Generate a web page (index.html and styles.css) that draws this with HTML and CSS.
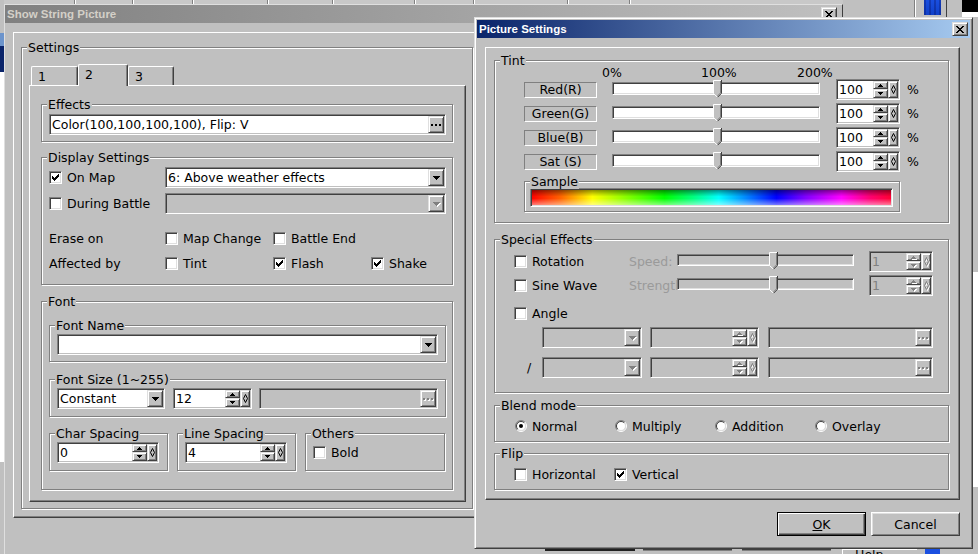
FILE: index.html
```html
<!DOCTYPE html>
<html lang="en">
<head>
<meta charset="utf-8">
<title>Picture Settings</title>
<link rel="stylesheet" href="styles.css">
</head>
<body>
<div class="desktop">
  <div class="bg-top"><span></span><span></span><span></span><span></span><span></span><span></span><span></span><span></span><span></span><span></span></div>
  <div class="bg-left"><span class="c-g"></span><span class="c-lb"></span><span class="c-nv"></span><span class="c-w"></span><span class="c-g"></span></div>
  <div class="bg-right">
    <div class="br-top"><span class="c-g"></span><span class="c-sep"></span><span class="c-g"></span><span class="c-blue"></span><span class="c-g"></span><span class="c-dk"></span><span class="c-g"></span><span class="c-blk"></span></div>
    <div class="br-col"><span class="c-g"></span><span class="c-w"></span><span class="c-g"></span></div>
  </div>

  <section class="win back">
    <div class="title inactive"><span class="ttext">Show String Picture</span><span class="rb xbtn"><svg width="8" height="7" viewBox="0 0 8 7"><path d="M0 0h2v1H0zM6 0h2v1H6zM1 1h2v1H1zM5 1h2v1H5zM2 2h4v1H2zM3 3h2v1H3zM2 4h4v1H2zM1 5h2v1H1zM5 5h2v1H5zM0 6h2v1H0zM6 6h2v1H6z"/></svg></span></div>
    <div class="bbody">
      <div class="frame bframe">
        <div class="group settings">
          <span class="legend">Settings</span>
          <div class="tabs"><span class="tab t1">1</span><span class="tab t2 sel">2</span><span class="tab t3">3</span></div>
          <div class="panel">
            <div class="group g-eff">
              <span class="legend">Effects</span>
              <div class="field e-eff"><span class="val">Color(100,100,100,100), Flip: V</span><span class="rb dots"><svg width="10" height="2" viewBox="0 0 10 2"><path d="M0 0h2v2H0zM4 0h2v2H4zM8 0h2v2H8z"/></svg></span></div>
            </div>

            <div class="group g-disp">
              <span class="legend">Display Settings</span>
              <div class="drow">
                <label class="chk dc1"><span class="cb"><svg width="7" height="7" viewBox="0 0 7 7"><path d="M6 0h1v1H6zM5 1h2v1H5zM0 2h1v1H0zM4 2h3v1H4zM0 3h2v1H0zM3 3h3v1H3zM0 4h5v1H0zM1 5h3v1H1zM2 6h1v1H2z"/></svg></span>On Map</label>
                <div class="field cmb-map"><span class="val">6: Above weather effects</span><span class="rb dd"><svg width="7" height="4" viewBox="0 0 7 4"><path d="M0 0h7v1H0zM1 1h5v1H1zM2 2h3v1H2zM3 3h1v1H3z"/></svg></span></div>
              </div>
              <div class="drow r2">
                <label class="chk dc1"><span class="cb"></span>During Battle</label>
                <div class="field dis cmb-map"><span class="val"></span><span class="rb dd"><svg width="7" height="4" viewBox="0 0 7 4"><path d="M0 0h7v1H0zM1 1h5v1H1zM2 2h3v1H2zM3 3h1v1H3z"/></svg></span></div>
              </div>
              <div class="drow r3">
                <span class="dc1">Erase on</span>
                <label class="chk dc2"><span class="cb"></span>Map Change</label>
                <label class="chk dc3"><span class="cb"></span>Battle End</label>
              </div>
              <div class="drow r4">
                <span class="dc1">Affected by</span>
                <label class="chk dc2"><span class="cb"></span>Tint</label>
                <label class="chk dc3"><span class="cb"><svg width="7" height="7" viewBox="0 0 7 7"><path d="M6 0h1v1H6zM5 1h2v1H5zM0 2h1v1H0zM4 2h3v1H4zM0 3h2v1H0zM3 3h3v1H3zM0 4h5v1H0zM1 5h3v1H1zM2 6h1v1H2z"/></svg></span>Flash</label>
                <label class="chk"><span class="cb"><svg width="7" height="7" viewBox="0 0 7 7"><path d="M6 0h1v1H6zM5 1h2v1H5zM0 2h1v1H0zM4 2h3v1H4zM0 3h2v1H0zM3 3h3v1H3zM0 4h5v1H0zM1 5h3v1H1zM2 6h1v1H2z"/></svg></span>Shake</label>
              </div>
            </div>

            <div class="group g-font">
              <span class="legend">Font</span>
              <div class="group g-fname">
                <span class="legend">Font Name</span>
                <div class="field cmb-fn"><span class="val"></span><span class="rb dd"><svg width="7" height="4" viewBox="0 0 7 4"><path d="M0 0h7v1H0zM1 1h5v1H1zM2 2h3v1H2zM3 3h1v1H3z"/></svg></span></div>
              </div>
              <div class="group g-fsize">
                <span class="legend">Font Size (1~255)</span>
                <div class="field cmb-const"><span class="val">Constant</span><span class="rb dd"><svg width="7" height="4" viewBox="0 0 7 4"><path d="M0 0h7v1H0zM1 1h5v1H1zM2 2h3v1H2zM3 3h1v1H3z"/></svg></span></div>
                <div class="field spin sp-12"><span class="val">12</span><span class="ud"><span class="rb up"><svg width="5" height="3" viewBox="0 0 5 3"><path d="M2 0h1v1H2zM1 1h3v1H1zM0 2h5v1H0z"/></svg></span><span class="rb dn"><svg width="5" height="3" viewBox="0 0 5 3"><path d="M0 0h5v1H0zM1 1h3v1H1zM2 2h1v1H2z"/></svg></span></span><span class="rb nb"><svg width="5" height="9" viewBox="0 0 5 9"><path d="M2.5 .5 4.5 4.5 2.5 8.5 .5 4.5z"/></svg></span></div>
                <div class="field dis ed-fs"><span class="val"></span><span class="rb dots"><svg width="10" height="2" viewBox="0 0 10 2"><path d="M0 0h2v2H0zM4 0h2v2H4zM8 0h2v2H8z"/></svg></span></div>
              </div>
              <div class="frow3">
                <div class="group g-cs">
                  <span class="legend">Char Spacing</span>
                  <div class="field spin sp-cs"><span class="val">0</span><span class="ud"><span class="rb up"><svg width="5" height="3" viewBox="0 0 5 3"><path d="M2 0h1v1H2zM1 1h3v1H1zM0 2h5v1H0z"/></svg></span><span class="rb dn"><svg width="5" height="3" viewBox="0 0 5 3"><path d="M0 0h5v1H0zM1 1h3v1H1zM2 2h1v1H2z"/></svg></span></span><span class="rb nb"><svg width="5" height="9" viewBox="0 0 5 9"><path d="M2.5 .5 4.5 4.5 2.5 8.5 .5 4.5z"/></svg></span></div>
                </div>
                <div class="group g-cs">
                  <span class="legend">Line Spacing</span>
                  <div class="field spin sp-cs"><span class="val">4</span><span class="ud"><span class="rb up"><svg width="5" height="3" viewBox="0 0 5 3"><path d="M2 0h1v1H2zM1 1h3v1H1zM0 2h5v1H0z"/></svg></span><span class="rb dn"><svg width="5" height="3" viewBox="0 0 5 3"><path d="M0 0h5v1H0zM1 1h3v1H1zM2 2h1v1H2z"/></svg></span></span><span class="rb nb"><svg width="5" height="9" viewBox="0 0 5 9"><path d="M2.5 .5 4.5 4.5 2.5 8.5 .5 4.5z"/></svg></span></div>
                </div>
                <div class="group g-oth">
                  <span class="legend">Others</span>
                  <div class="oth-row"><label class="chk"><span class="cb"></span>Bold</label></div>
                </div>
              </div>
            </div>
          </div>
        </div>
      </div>
    </div>
  </section>

  <div class="bg-bottom"><span class="c-g"></span><span class="b-def"></span><span class="c-g"></span><span class="b-btn"></span><span class="c-g"></span><span class="b-btn"></span><span class="c-g"></span><span class="b-help"><span>Help</span></span><span class="c-g"></span><span class="c-blue"></span><span class="c-g"></span></div>

  <section class="win front">
    <div class="title active"><span class="ttext">Picture Settings</span><span class="rb xbtn"><svg width="8" height="7" viewBox="0 0 8 7"><path d="M0 0h2v1H0zM6 0h2v1H6zM1 1h2v1H1zM5 1h2v1H5zM2 2h4v1H2zM3 3h2v1H3zM2 4h4v1H2zM1 5h2v1H1zM5 5h2v1H5zM0 6h2v1H0zM6 6h2v1H6z"/></svg></span></div>
    <div class="fbody">
      <div class="frame fframe">
        <div class="group g-tint">
          <span class="legend">Tint</span>
          <div class="pct"><span class="p0">0%</span><span class="p1">100%</span><span>200%</span></div>

          <div class="trow">
            <span class="lbox">Red(R)</span>
            <div class="slider s-tint"><div class="track"></div><svg class="thumb" width="9" height="18" viewBox="0 0 9 18"><path d="M0 0H9V13L4.5 17.5 0 13Z" fill="#c0c0c0"/><path d="M.5 13.5V.5H8M.5 13.5 4.5 17.3" fill="none" stroke="#fff"/><path d="M8.5 0V13.3L4.5 17.3" fill="none" stroke="#404040"/><path d="M7.5 1V12.9L4.5 15.9" fill="none" stroke="#808080"/></svg></div>
            <div class="field spin sp-tint"><span class="val">100</span><span class="ud"><span class="rb up"><svg width="5" height="3" viewBox="0 0 5 3"><path d="M2 0h1v1H2zM1 1h3v1H1zM0 2h5v1H0z"/></svg></span><span class="rb dn"><svg width="5" height="3" viewBox="0 0 5 3"><path d="M0 0h5v1H0zM1 1h3v1H1zM2 2h1v1H2z"/></svg></span></span><span class="rb nb"><svg width="5" height="9" viewBox="0 0 5 9"><path d="M2.5 .5 4.5 4.5 2.5 8.5 .5 4.5z"/></svg></span></div>
            <span class="pc">%</span>
          </div>
          <div class="trow">
            <span class="lbox">Green(G)</span>
            <div class="slider s-tint"><div class="track"></div><svg class="thumb" width="9" height="18" viewBox="0 0 9 18"><path d="M0 0H9V13L4.5 17.5 0 13Z" fill="#c0c0c0"/><path d="M.5 13.5V.5H8M.5 13.5 4.5 17.3" fill="none" stroke="#fff"/><path d="M8.5 0V13.3L4.5 17.3" fill="none" stroke="#404040"/><path d="M7.5 1V12.9L4.5 15.9" fill="none" stroke="#808080"/></svg></div>
            <div class="field spin sp-tint"><span class="val">100</span><span class="ud"><span class="rb up"><svg width="5" height="3" viewBox="0 0 5 3"><path d="M2 0h1v1H2zM1 1h3v1H1zM0 2h5v1H0z"/></svg></span><span class="rb dn"><svg width="5" height="3" viewBox="0 0 5 3"><path d="M0 0h5v1H0zM1 1h3v1H1zM2 2h1v1H2z"/></svg></span></span><span class="rb nb"><svg width="5" height="9" viewBox="0 0 5 9"><path d="M2.5 .5 4.5 4.5 2.5 8.5 .5 4.5z"/></svg></span></div>
            <span class="pc">%</span>
          </div>
          <div class="trow">
            <span class="lbox">Blue(B)</span>
            <div class="slider s-tint"><div class="track"></div><svg class="thumb" width="9" height="18" viewBox="0 0 9 18"><path d="M0 0H9V13L4.5 17.5 0 13Z" fill="#c0c0c0"/><path d="M.5 13.5V.5H8M.5 13.5 4.5 17.3" fill="none" stroke="#fff"/><path d="M8.5 0V13.3L4.5 17.3" fill="none" stroke="#404040"/><path d="M7.5 1V12.9L4.5 15.9" fill="none" stroke="#808080"/></svg></div>
            <div class="field spin sp-tint"><span class="val">100</span><span class="ud"><span class="rb up"><svg width="5" height="3" viewBox="0 0 5 3"><path d="M2 0h1v1H2zM1 1h3v1H1zM0 2h5v1H0z"/></svg></span><span class="rb dn"><svg width="5" height="3" viewBox="0 0 5 3"><path d="M0 0h5v1H0zM1 1h3v1H1zM2 2h1v1H2z"/></svg></span></span><span class="rb nb"><svg width="5" height="9" viewBox="0 0 5 9"><path d="M2.5 .5 4.5 4.5 2.5 8.5 .5 4.5z"/></svg></span></div>
            <span class="pc">%</span>
          </div>
          <div class="trow">
            <span class="lbox">Sat (S)</span>
            <div class="slider s-tint"><div class="track"></div><svg class="thumb" width="9" height="18" viewBox="0 0 9 18"><path d="M0 0H9V13L4.5 17.5 0 13Z" fill="#c0c0c0"/><path d="M.5 13.5V.5H8M.5 13.5 4.5 17.3" fill="none" stroke="#fff"/><path d="M8.5 0V13.3L4.5 17.3" fill="none" stroke="#404040"/><path d="M7.5 1V12.9L4.5 15.9" fill="none" stroke="#808080"/></svg></div>
            <div class="field spin sp-tint"><span class="val">100</span><span class="ud"><span class="rb up"><svg width="5" height="3" viewBox="0 0 5 3"><path d="M2 0h1v1H2zM1 1h3v1H1zM0 2h5v1H0z"/></svg></span><span class="rb dn"><svg width="5" height="3" viewBox="0 0 5 3"><path d="M0 0h5v1H0zM1 1h3v1H1zM2 2h1v1H2z"/></svg></span></span><span class="rb nb"><svg width="5" height="9" viewBox="0 0 5 9"><path d="M2.5 .5 4.5 4.5 2.5 8.5 .5 4.5z"/></svg></span></div>
            <span class="pc">%</span>
          </div>

          <div class="group g-sample">
            <span class="legend">Sample</span>
            <div class="rainbow"></div>
          </div>
        </div>

        <div class="group g-fx">
          <span class="legend">Special Effects</span>
          <div class="frow">
            <label class="chk fx-c1"><span class="cb"></span>Rotation</label>
            <span class="fx-lbl">Speed:</span>
            <div class="slider s-fx"><div class="track"></div><svg class="thumb" width="9" height="18" viewBox="0 0 9 18"><path d="M0 0H9V13L4.5 17.5 0 13Z" fill="#c0c0c0"/><path d="M.5 13.5V.5H8M.5 13.5 4.5 17.3" fill="none" stroke="#fff"/><path d="M8.5 0V13.3L4.5 17.3" fill="none" stroke="#404040"/><path d="M7.5 1V12.9L4.5 15.9" fill="none" stroke="#808080"/></svg></div>
            <div class="field spin dis sp-fx"><span class="val">1</span><span class="ud"><span class="rb up"><svg width="5" height="3" viewBox="0 0 5 3"><path d="M2 0h1v1H2zM1 1h3v1H1zM0 2h5v1H0z"/></svg></span><span class="rb dn"><svg width="5" height="3" viewBox="0 0 5 3"><path d="M0 0h5v1H0zM1 1h3v1H1zM2 2h1v1H2z"/></svg></span></span><span class="rb nb"><svg width="5" height="9" viewBox="0 0 5 9"><path d="M2.5 .5 4.5 4.5 2.5 8.5 .5 4.5z"/></svg></span></div>
          </div>
          <div class="frow r2">
            <label class="chk fx-c1"><span class="cb"></span>Sine Wave</label>
            <span class="fx-lbl">Strength:</span>
            <div class="slider s-fx"><div class="track"></div><svg class="thumb" width="9" height="18" viewBox="0 0 9 18"><path d="M0 0H9V13L4.5 17.5 0 13Z" fill="#c0c0c0"/><path d="M.5 13.5V.5H8M.5 13.5 4.5 17.3" fill="none" stroke="#fff"/><path d="M8.5 0V13.3L4.5 17.3" fill="none" stroke="#404040"/><path d="M7.5 1V12.9L4.5 15.9" fill="none" stroke="#808080"/></svg></div>
            <div class="field spin dis sp-fx"><span class="val">1</span><span class="ud"><span class="rb up"><svg width="5" height="3" viewBox="0 0 5 3"><path d="M2 0h1v1H2zM1 1h3v1H1zM0 2h5v1H0z"/></svg></span><span class="rb dn"><svg width="5" height="3" viewBox="0 0 5 3"><path d="M0 0h5v1H0zM1 1h3v1H1zM2 2h1v1H2z"/></svg></span></span><span class="rb nb"><svg width="5" height="9" viewBox="0 0 5 9"><path d="M2.5 .5 4.5 4.5 2.5 8.5 .5 4.5z"/></svg></span></div>
          </div>
          <div class="frow r3">
            <label class="chk"><span class="cb"></span>Angle</label>
          </div>
          <div class="frow r4">
            <span class="fx-ind"></span>
            <div class="field dis cmb-a"><span class="val"></span><span class="rb dd"><svg width="7" height="4" viewBox="0 0 7 4"><path d="M0 0h7v1H0zM1 1h5v1H1zM2 2h3v1H2zM3 3h1v1H3z"/></svg></span></div>
            <div class="field spin dis sp-a"><span class="val"></span><span class="ud"><span class="rb up"><svg width="5" height="3" viewBox="0 0 5 3"><path d="M2 0h1v1H2zM1 1h3v1H1zM0 2h5v1H0z"/></svg></span><span class="rb dn"><svg width="5" height="3" viewBox="0 0 5 3"><path d="M0 0h5v1H0zM1 1h3v1H1zM2 2h1v1H2z"/></svg></span></span><span class="rb nb"><svg width="5" height="9" viewBox="0 0 5 9"><path d="M2.5 .5 4.5 4.5 2.5 8.5 .5 4.5z"/></svg></span></div>
            <div class="field dis ed-a"><span class="val"></span><span class="rb dots"><svg width="10" height="2" viewBox="0 0 10 2"><path d="M0 0h2v2H0zM4 0h2v2H4zM8 0h2v2H8z"/></svg></span></div>
          </div>
          <div class="frow r5">
            <span class="fx-ind slash">/</span>
            <div class="field dis cmb-a"><span class="val"></span><span class="rb dd"><svg width="7" height="4" viewBox="0 0 7 4"><path d="M0 0h7v1H0zM1 1h5v1H1zM2 2h3v1H2zM3 3h1v1H3z"/></svg></span></div>
            <div class="field spin dis sp-a"><span class="val"></span><span class="ud"><span class="rb up"><svg width="5" height="3" viewBox="0 0 5 3"><path d="M2 0h1v1H2zM1 1h3v1H1zM0 2h5v1H0z"/></svg></span><span class="rb dn"><svg width="5" height="3" viewBox="0 0 5 3"><path d="M0 0h5v1H0zM1 1h3v1H1zM2 2h1v1H2z"/></svg></span></span><span class="rb nb"><svg width="5" height="9" viewBox="0 0 5 9"><path d="M2.5 .5 4.5 4.5 2.5 8.5 .5 4.5z"/></svg></span></div>
            <div class="field dis ed-a"><span class="val"></span><span class="rb dots"><svg width="10" height="2" viewBox="0 0 10 2"><path d="M0 0h2v2H0zM4 0h2v2H4zM8 0h2v2H8z"/></svg></span></div>
          </div>
        </div>

        <div class="group g-blend">
          <span class="legend">Blend mode</span>
          <div class="orow">
            <label class="opt"><svg class="rd" width="12" height="12" viewBox="0 0 12 12"><circle cx="6" cy="6" r="4.5" fill="#fff"/><path d="M2.1 9.9A5.5 5.5 0 0 1 9.9 2.1" fill="none" stroke="#808080"/><path d="M9.9 2.1A5.5 5.5 0 0 1 2.1 9.9" fill="none" stroke="#fff"/><path d="M2.8 9.2A4.5 4.5 0 0 1 9.2 2.8" fill="none" stroke="#404040"/><path d="M9.2 2.8A4.5 4.5 0 0 1 2.8 9.2" fill="none" stroke="#dfdfdf"/><circle cx="6" cy="6" r="2" fill="#000"/></svg>Normal</label>
            <label class="opt"><svg class="rd" width="12" height="12" viewBox="0 0 12 12"><circle cx="6" cy="6" r="4.5" fill="#fff"/><path d="M2.1 9.9A5.5 5.5 0 0 1 9.9 2.1" fill="none" stroke="#808080"/><path d="M9.9 2.1A5.5 5.5 0 0 1 2.1 9.9" fill="none" stroke="#fff"/><path d="M2.8 9.2A4.5 4.5 0 0 1 9.2 2.8" fill="none" stroke="#404040"/><path d="M9.2 2.8A4.5 4.5 0 0 1 2.8 9.2" fill="none" stroke="#dfdfdf"/></svg>Multiply</label>
            <label class="opt"><svg class="rd" width="12" height="12" viewBox="0 0 12 12"><circle cx="6" cy="6" r="4.5" fill="#fff"/><path d="M2.1 9.9A5.5 5.5 0 0 1 9.9 2.1" fill="none" stroke="#808080"/><path d="M9.9 2.1A5.5 5.5 0 0 1 2.1 9.9" fill="none" stroke="#fff"/><path d="M2.8 9.2A4.5 4.5 0 0 1 9.2 2.8" fill="none" stroke="#404040"/><path d="M9.2 2.8A4.5 4.5 0 0 1 2.8 9.2" fill="none" stroke="#dfdfdf"/></svg>Addition</label>
            <label class="opt"><svg class="rd" width="12" height="12" viewBox="0 0 12 12"><circle cx="6" cy="6" r="4.5" fill="#fff"/><path d="M2.1 9.9A5.5 5.5 0 0 1 9.9 2.1" fill="none" stroke="#808080"/><path d="M9.9 2.1A5.5 5.5 0 0 1 2.1 9.9" fill="none" stroke="#fff"/><path d="M2.8 9.2A4.5 4.5 0 0 1 9.2 2.8" fill="none" stroke="#404040"/><path d="M9.2 2.8A4.5 4.5 0 0 1 2.8 9.2" fill="none" stroke="#dfdfdf"/></svg>Overlay</label>
          </div>
        </div>

        <div class="group g-flip">
          <span class="legend">Flip</span>
          <div class="orow">
            <label class="chk opt"><span class="cb"></span>Horizontal</label>
            <label class="chk opt"><span class="cb"><svg width="7" height="7" viewBox="0 0 7 7"><path d="M6 0h1v1H6zM5 1h2v1H5zM0 2h1v1H0zM4 2h3v1H4zM0 3h2v1H0zM3 3h3v1H3zM0 4h5v1H0zM1 5h3v1H1zM2 6h1v1H2z"/></svg></span>Vertical</label>
          </div>
        </div>
      </div>
      <div class="fbtns">
        <span class="pbtn def"><span class="u">O</span>K</span>
        <span class="pbtn">Cancel</span>
      </div>
    </div>
  </section>
</div>
</body>
</html>
```

FILE: styles.css
```css
* { box-sizing: border-box; margin: 0; padding: 0; }
html, body { margin: 0; background: #c0c0c0; }
body {
  font-family: "DejaVu Sans", "Noto Sans", sans-serif;
  font-size: 12.5px;
  line-height: 15px;
  color: #000;
}
svg { display: block; }
label { cursor: default; }

.desktop { position: relative; width: 978px; height: 554px; overflow: hidden; background: #c0c0c0; }

/* ---------- background windows ---------- */
.c-g { background: #c0c0c0; }
.c-w { background: #fff; }
.c-lb { background: #6c94cc; }
.c-nv { background: #0a246a; }

.bg-top {
  position: absolute; left: 0; top: 0; width: 978px; height: 4px;
  display: grid;
  grid-template-columns: 75px 58px 60px 75px 65px 82px 59px 94px 62px 1fr;
  background: #c8c8c8;
}
.bg-top span { border-right: 1px solid #808080; box-shadow: 1px 0 0 #fff; }

.bg-left {
  position: absolute; left: 0; top: 0; width: 4px; height: 554px;
  display: grid; grid-template-rows: 33px 13px 26px 390px 1fr;
}

.bg-right { position: absolute; left: 843px; top: 0; width: 135px; height: 554px; background: #c0c0c0; }
.br-top {
  height: 17px; display: grid;
  grid-template-columns: 71px 2px 8px 17px 5px 1px 15px 16px;
}
.c-sep { border-left: 1px solid #808080; border-right: 1px solid #fff; }
.c-dk { background: #404040; }
.c-blue {
  background:
    repeating-linear-gradient(90deg, rgba(0,0,60,.25) 0 2px, transparent 2px 5px) top / 100% 15px no-repeat,
    linear-gradient(#1a4fe0, #1040c8) top / 100% 15px no-repeat,
    #c0c0c0;
}
.c-blk { background: linear-gradient(#000, #000) top / 100% 12px no-repeat, #fff; }
.br-col {
  margin-left: 130px; width: 5px; height: 537px;
  display: grid; grid-template-rows: 255px 215px 1fr;
}

.bg-bottom {
  position: absolute; left: 474px; top: 549px; width: 504px; height: 5px;
  display: grid;
  grid-template-columns: 71px 90px 8px 89px 10px 89px 11px 75px 8px 15px 1fr;
}
.b-def { background: #c0c0c0; border-top: 2px solid #202020; }
.b-btn { background: #c0c0c0; border-top: 1px solid #404040; box-shadow: inset 0 1px 0 #808080; }
.b-help {
  background: #c0c0c0; border-top: 1px solid #fff; border-left: 1px solid #fff;
  overflow: hidden; padding-left: 12px;
}
.b-help span { display: block; margin-top: -3px; }
.bg-bottom .c-blue { background: #1a4fe0; }

/* ---------- generic win controls ---------- */
.win { position: absolute; background: #c0c0c0; }

.title { height: 18px; display: flex; justify-content: space-between; align-items: flex-start; }
.ttext {
  font-family: "Liberation Sans", Arial, sans-serif;
  font-weight: bold; font-size: 11.5px; line-height: 18px;
  padding-left: 2px; white-space: nowrap;
}
.inactive { background: linear-gradient(to right, #808080, #c0c0c0); color: #d4d0c8; }
.active { background: linear-gradient(to right, #0a246a, #a6caf0); color: #fff; }
.xbtn { width: 16px; height: 14px; margin-top: 2px; }

.rb {
  background: #c0c0c0;
  border: 1px solid; border-color: #dfdfdf #404040 #404040 #dfdfdf;
  box-shadow: inset 1px 1px 0 #fff, inset -1px -1px 0 #808080;
  display: flex; align-items: center; justify-content: center; flex: none;
}

.field {
  display: flex; flex: none; height: 21px;
  background: #fff;
  border: 1px solid; border-color: #808080 #fff #fff #808080;
  box-shadow: inset 1px 1px 0 #404040, inset -1px -1px 0 #c0c0c0;
  padding: 1px;
}
.field.dis { background: #c0c0c0; color: #808080; }
.field .val { flex: 1; min-width: 0; padding-left: 1px; line-height: 17px; white-space: nowrap; overflow: hidden; }
.dd, .dots { width: 16px; }
.dis svg path { fill: #808080; }
.dis .rb svg { filter: drop-shadow(1px 1px 0 #fff); }

.ud { display: flex; flex-direction: column; width: 15px; flex: none; }
.ud .up { height: 8px; }
.ud .dn { height: 9px; }
.nb { width: 10px; }
.nb svg path { fill: none; stroke: #000; }
.dis .nb svg path { fill: none; stroke: #808080; }

.cb {
  width: 13px; height: 13px; flex: none;
  background: #fff;
  border: 1px solid; border-color: #808080 #fff #fff #808080;
  box-shadow: inset 1px 1px 0 #404040, inset -1px -1px 0 #dfdfdf;
  padding: 2px;
}
.chk { display: flex; align-items: center; gap: 5px; white-space: nowrap; }

.group {
  position: relative; flex: none;
  border: 1px solid #808080;
  box-shadow: 1px 1px 0 #fff, inset 1px 1px 0 #fff;
}
.legend {
  position: absolute; top: -8px; left: 5px;
  padding: 0 1px; background: #c0c0c0;
  line-height: 15px; white-space: nowrap;
}

.frame {
  border: 1px solid; border-color: #fff #404040 #404040 #fff;
  box-shadow: inset -1px -1px 0 #808080;
}

/* ---------- back dialog ---------- */
.back {
  left: 4px; top: 4px; width: 839px; height: 560px;
  border-left: 1px solid #dfdfdf; border-top: 1px solid #dfdfdf; border-right: 1px solid #404040;
}
.back .xbtn { margin-right: 5px; }
.bbody { padding: 9px 0 0 8px; }
.bframe { width: 820px; height: 486px; padding: 14px 0 0 7px; }
.settings { width: 452px; height: 462px; padding: 16px 0 0 7px; }

.tabs { display: flex; align-items: flex-end; height: 21px; margin-left: 2px; }
.tab {
  height: 19px; padding-left: 6px; line-height: 19px;
  border: 1px solid; border-bottom: 0;
  border-color: #fff #404040 #404040 #fff;
  box-shadow: inset -1px 0 0 #808080;
  border-radius: 2px 2px 0 0;
  background: #c0c0c0;
}
.t1 { width: 47px; }
.t2 { width: 50px; }
.t3 { width: 46px; }
.tab.sel { height: 22px; margin-bottom: -1px; position: relative; z-index: 1; }

.panel {
  width: 437px; height: 417px; padding: 18px 0 0 11px;
  border: 1px solid; border-color: #fff #404040 #404040 #fff;
  box-shadow: inset -1px -1px 0 #808080;
}

.g-eff { width: 412px; height: 38px; padding: 9px 0 0 7px; }
.e-eff { width: 397px; }

.g-disp { width: 412px; height: 128px; margin-top: 15px; padding: 9px 0 0 7px; }
.drow { display: flex; align-items: center; height: 21px; }
.drow.r2 { margin-top: 5px; }
.drow.r3 { margin-top: 12px; height: 25px; }
.drow.r4 { height: 25px; }
.dc1 { width: 116px; flex: none; }
.dc2 { width: 108px; flex: none; }
.dc3 { width: 98px; flex: none; }
.cmb-map { width: 281px; }

.g-font { width: 412px; height: 189px; margin-top: 16px; padding: 23px 0 0 7px; }
.g-fname { width: 397px; height: 37px; padding: 8px 0 0 7px; }
.cmb-fn { width: 381px; }
.g-fsize { width: 397px; height: 38px; margin-top: 17px; padding: 8px 0 0 7px; display: flex; align-items: flex-start; }
.cmb-const { width: 108px; }
.sp-12 { width: 79px; margin-left: 8px; }
.ed-fs { width: 179px; margin-left: 7px; }
.frow3 { display: flex; gap: 9px; margin-top: 16px; }
.g-cs { width: 119px; height: 38px; padding: 8px 0 0 7px; }
.sp-cs { width: 102px; }
.g-oth { width: 140px; height: 38px; padding: 8px 0 0 7px; }
.oth-row { height: 21px; display: flex; align-items: center; }

/* ---------- front dialog ---------- */
.front {
  left: 474px; top: 17px; width: 499px; height: 532px;
  border: 1px solid; border-color: #dfdfdf #404040 #404040 #dfdfdf;
  box-shadow: inset 1px 1px 0 #fff, inset -1px -1px 0 #808080;
  padding: 2px;
}
.front .xbtn { margin-right: 2px; }
.fbody { padding: 9px 0 0 8px; }
.fframe { width: 475px; height: 453px; padding: 12px 0 0 8px; }

.g-tint { width: 455px; height: 163px; padding: 5px 0 0 29px; }
.pct { display: flex; height: 13px; line-height: 13px; margin-left: 78px; }
.p0 { width: 99px; }
.p1 { width: 96px; }
.trow { display: flex; align-items: center; height: 21px; margin-top: 3px; }
.pct + .trow { margin-top: 0; }
.lbox {
  width: 73px; height: 16px; flex: none;
  border: 1px solid; border-color: #808080 #fff #fff #808080;
  text-align: center; line-height: 14px;
}
.slider { position: relative; height: 21px; padding-top: 3px; flex: none; }
.track {
  height: 13px; background: #fff;
  border: 1px solid; border-color: #808080 #fff #fff #808080;
  box-shadow: inset 1px 1px 0 #404040, inset -1px -1px 0 #dfdfdf;
}
.thumb { position: absolute; top: 1px; }
.s-tint { width: 208px; margin-left: 15px; }
.s-tint .thumb { left: 101px; }
.sp-tint { width: 64px; margin-left: 16px; }
.pc { margin-left: 7px; }

.g-sample { width: 376px; height: 31px; margin-top: 9px; padding: 6px 0 0 5px; }
.rainbow {
  width: 363px; height: 19px;
  border: 1px solid; border-color: #808080 #fff #fff #808080;
  box-shadow: inset 1px 1px 0 #404040, inset -1px -1px 0 #dfdfdf;
  background:
    linear-gradient(to bottom, rgba(0,0,0,.5) 0%, rgba(0,0,0,.15) 30%, rgba(0,0,0,0) 45%, rgba(255,255,255,0) 55%, rgba(255,255,255,.55) 100%),
    linear-gradient(to right, #ff0000 0%, #ff6000 8%, #ffff00 17%, #80ff00 27%, #00ff00 37%, #00ff80 45%, #00ffff 52%, #0080ff 60%, #0000ff 68%, #8000ff 76%, #ff00ff 86%, #ff0070 94%, #ff0030 100%);
}

.g-fx { width: 455px; height: 154px; margin-top: 16px; padding: 11px 0 0 19px; }
.frow { display: flex; align-items: center; height: 21px; }
.frow.r2 { margin-top: 3px; }
.frow.r3 { margin-top: 7px; }
.frow.r4 { margin-top: 3px; }
.frow.r5 { margin-top: 9px; }
.fx-c1 { width: 115px; flex: none; }
.fx-lbl { width: 48px; flex: none; overflow: hidden; white-space: nowrap; color: #9a9a9a; }
.s-fx { width: 177px; }
.s-fx .track { height: 12px; background: #c0c0c0; }
.s-fx .thumb { left: 92px; }
.sp-fx { width: 64px; margin-left: 15px; }
.fx-ind { width: 28px; flex: none; }
.slash { padding-left: 13px; }
.cmb-a { width: 100px; }
.sp-a { width: 109px; margin-left: 8px; }
.ed-a { width: 165px; margin-left: 9px; }

.g-blend { width: 455px; height: 37px; margin-top: 12px; padding: 12px 0 0 20px; }
.g-flip { width: 455px; height: 37px; margin-top: 11px; padding: 12px 0 0 19px; }
.orow { display: flex; align-items: center; height: 16px; }
.opt { display: flex; align-items: center; gap: 5px; width: 100px; flex: none; white-space: nowrap; }
.rd { flex: none; }

.fbtns { display: flex; justify-content: flex-end; gap: 5px; width: 475px; margin-top: 12px; }
.pbtn {
  width: 89px; height: 24px;
  display: flex; align-items: center; justify-content: center;
  background: #c0c0c0;
  border: 1px solid; border-color: #fff #404040 #404040 #fff;
  box-shadow: inset 1px 1px 0 #dfdfdf, inset -1px -1px 0 #808080;
}
.pbtn.def {
  border: 1px solid #000;
  box-shadow: inset 1px 1px 0 #fff, inset -1px -1px 0 #404040, inset -2px -2px 0 #808080;
}
.u { text-decoration: underline; }
```
